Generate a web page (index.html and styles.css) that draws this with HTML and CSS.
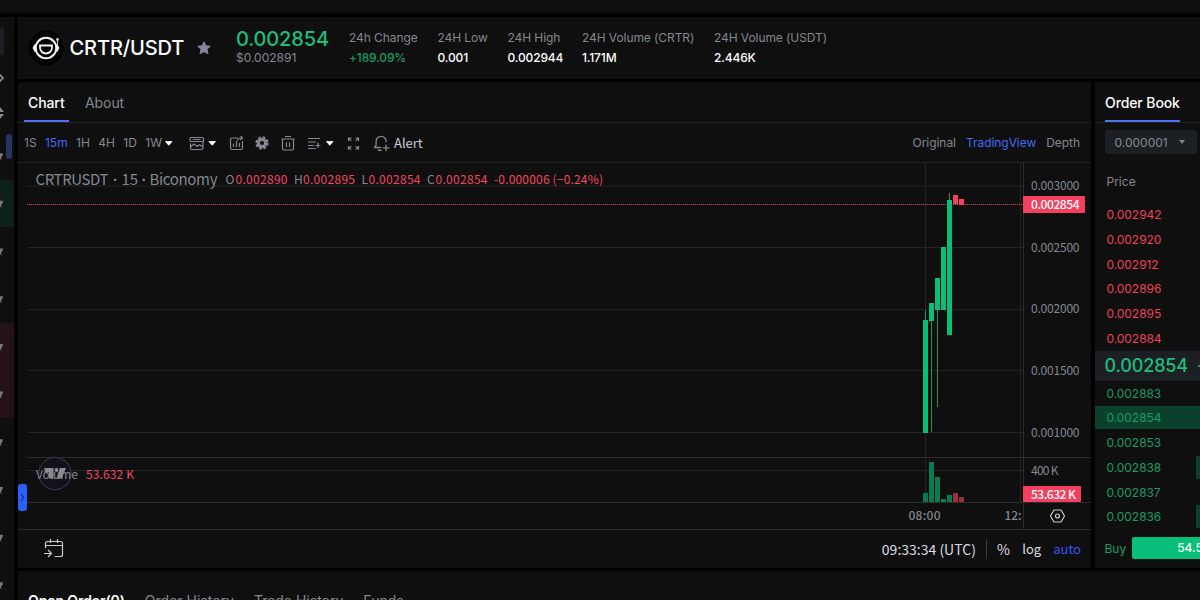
FILE: index.html
```html
<!DOCTYPE html>
<html lang="en">
<head>
    <meta charset="UTF-8">
    <meta name="viewport" content="width=device-width, initial-scale=1.0">
    <title>CRTR/USDT</title>
    <link rel="stylesheet" href="styles.css">
</head>
<body>
    <div class="topbar"></div>
    <div class="layout">
        <aside class="pairs">
            <div class="pairs-head">
                <div class="search"></div>
                <svg class="edge-icon" width="6" height="14" viewBox="0 0 6 14"><path d="M-3 7L0 4L3 7L0 10Z" fill="none" stroke="#8d8f98" stroke-width="1.6"/></svg>
                <svg class="edge-icon sort" width="6" height="14" viewBox="0 0 6 14"><path d="M-4 6L0 1L4 6ZM-4 8L0 13L4 8Z" fill="#85878f"/></svg>
            </div>
            <div class="pair"></div>
            <div class="pair up"></div>
            <div class="pair"></div>
            <div class="pair"></div>
            <div class="pair down"></div>
            <div class="pair down"></div>
            <div class="pair"></div>
            <div class="pair"></div>
            <div class="pair"></div>
            <div class="pair"></div>
            <div class="scroll-thumb"></div>
        </aside>

        <main class="content">
            <header class="ticker">
                <svg class="coin" width="36" height="36" viewBox="0 0 36 36">
                    <circle cx="18" cy="18" r="17.5" fill="#000"/>
                    <circle cx="18" cy="18" r="10.3" fill="none" stroke="#f4f4f4" stroke-width="2"/>
                    <path d="M7 14.5L5 18L7 21.5ZM29 14.5L31 18L29 21.5Z" fill="#f4f4f4" stroke="#f4f4f4"/>
                    <path d="M29.5 15V10" stroke="#bbb" stroke-width="1.2"/>
                    <circle cx="29.5" cy="9.5" r="1.4" fill="#ccc"/>
                    <path d="M12 15.5H24V17.5A6 6 0 0 1 12 17.5Z" fill="none" stroke="#f4f4f4" stroke-width="1.8"/>
                </svg>
                <h1 class="symbol">CRTR/USDT</h1>
                <svg class="fav" width="14" height="14" viewBox="0 0 14 14"><path d="M7 .8L8.9 4.8L13.2 5.3L10 8.3L10.9 12.7L7 10.6L3.1 12.7L4 8.3L.8 5.3L5.1 4.8Z" fill="#85879b" stroke="#85879b" stroke-linejoin="round"/></svg>
                <div class="last">
                    <div class="last-price">0.002854</div>
                    <div class="last-usd">$0.002891</div>
                </div>
                <dl class="stat change"><dt>24h Change</dt><dd class="green">+189.09%</dd></dl>
                <dl class="stat low"><dt>24H Low</dt><dd>0.001</dd></dl>
                <dl class="stat high"><dt>24H High</dt><dd>0.002944</dd></dl>
                <dl class="stat volume"><dt>24H Volume (CRTR)</dt><dd>1.171M</dd></dl>
                <dl class="stat"><dt>24H Volume (USDT)</dt><dd>2.446K</dd></dl>
            </header>

            <div class="middle">
                <section class="chart-panel">
                    <nav class="tabs">
                        <a class="tab active">Chart</a>
                        <a class="tab">About</a>
                    </nav>
                    <div class="toolbar">
                        <div class="intervals">
                            <span>1S</span><span class="blue">15m</span><span>1H</span><span>4H</span><span>1D</span><span>1W</span>
                        </div>
                        <svg class="tools" width="235" height="24" viewBox="163 131 235 24" fill="none" stroke="#85878f" stroke-width="1.2">
                            <!-- dropdown carets -->
                            <path d="M165.500 141.500h6.500l-3.250 3.800ZM209 141.500h6.500l-3.250 3.800ZM326.500 141.500h6.500l-3.250 3.800Z" fill="#fff" stroke="#fff" stroke-width=".8" stroke-linejoin="round"/>
                            <!-- chart type -->
                            <rect x="190" y="137.500" width="13.500" height="4" rx="1"/>
                            <path d="M193 139.500h7.500M190.500 143.500v4.500q0 1.500 1.500 1.500h9.500q1.500 0 1.500-1.500v-7M190.500 147l3.500-3 3.300 2.500 2.200-1.800 3.500 2"/>
                            <!-- indicators -->
                            <path d="M238 138h-6q-1.500 0-1.500 1.500v8.500q0 1.500 1.500 1.500h9q1.500 0 1.500-1.500v-7M233.500 147v-3.500M236.500 147v-6M239.500 147v-4M237.500 140.500q.5-2.500 4.500-2.500M240.500 136l2 2-2 2"/>
                            <!-- settings -->
                            <circle cx="262" cy="143" r="3.700" stroke-width="3.200"/>
                            <circle cx="262" cy="143" r="5.600" stroke-width="2.200" stroke-dasharray="2.500 1.900"/>
                            <!-- remove -->
                            <path d="M281.500 139h13M285 136.500h6M282.500 139v9.500q0 1.500 1.500 1.500h8q1.500 0 1.500-1.500v-9.500M286.500 142.500v4.500M289.500 142.500v4.500"/>
                            <!-- indicator list -->
                            <path d="M308 138.500h12M308 142h8M308 145.500h6M308 148.500h8M318 142.500v5.500M315.500 145.500h5"/>
                            <!-- fullscreen -->
                            <path d="M348.500 141v-3h3M355.500 138h3v3M348.500 146v3h3M355.500 149h3v-3M349 138.500l2.300 2.300M358 138.500l-2.300 2.300M349 148.500l2.300-2.300M358 148.500l-2.300-2.300"/>
                            <!-- alert bell -->
                            <path d="M381 147.500h-6.200q0-1 1.300-2.200v-4a5 5 0 0 1 10 0v1M378 149.500q1.700 1.800 3.800 .3M386 144.500v6.500M382.800 147.800h6.500" stroke-width="1.300"/>
                        </svg>
                        <span class="alert">Alert</span>
                        <div class="views"><span>Original</span><span class="blue">TradingView</span><span>Depth</span></div>
                    </div>

                    <svg class="chart" width="1073" height="366" viewBox="18 163 1073 366">
                        <!-- grid -->
                        <g stroke="#222326">
                            <path d="M27 186H1023M27 247.500H1023M27 309.500H1023M27 370.500H1023M27 432.500H1023M27 470.500H1023"/>
                            <path d="M925.500 163V502M1020.500 163V502"/>
                        </g>
                        <path d="M27 457.500H1091M27 502.500H1091M1023.500 163V529" stroke="#2b2c30"/>
                        <!-- last price line -->
                        <path d="M27 204.500H1023" stroke="#42181f"/>
                        <path d="M27 204.500H1023" stroke="#c9475a" stroke-dasharray="1 1" shape-rendering="crispEdges"/>
                        <!-- candles -->
                        <path d="M925.500 310V320M931.500 321V432M937.500 310V407M949.500 193V200" stroke="#0a9c68"/>
                        <g fill="#07bf79">
                            <rect x="923" y="320" width="5" height="113"/>
                            <rect x="929" y="303" width="5" height="18"/>
                            <rect x="935" y="278" width="5" height="32"/>
                            <rect x="941" y="247" width="5" height="63"/>
                            <rect x="947" y="200" width="5" height="135"/>
                        </g>
                        <g fill="#f7405f">
                            <rect x="953" y="195" width="5" height="9"/>
                            <rect x="959" y="199" width="5" height="6"/>
                        </g>
                        <!-- volume -->
                        <g fill="#097b50">
                            <rect x="923" y="493" width="5" height="9"/>
                            <rect x="929" y="462" width="5" height="40"/>
                            <rect x="935" y="477" width="5" height="25"/>
                            <rect x="941" y="499" width="5" height="3"/>
                            <rect x="947" y="495" width="5" height="7"/>
                        </g>
                        <g fill="#982e42">
                            <rect x="953" y="493" width="5" height="9"/>
                            <rect x="959" y="497" width="5" height="5"/>
                        </g>
                        <!-- logo badge -->
                        <circle cx="55" cy="473.500" r="16.300" fill="#12131a" stroke="#3a3b46"/>
                        <path d="M44.500 468h9v10.500h-4.500v-6h-4.500ZM60 468h6l-4.500 10.500h-5Z" fill="#8b8c94"/>
                        <circle cx="56.500" cy="470" r="2" fill="#8b8c94"/>
                        <!-- legend -->
                        <g fill="#85878f">
                            <g font-size="15">
                                <text x="35.500" y="185" textLength="73">CRTRUSDT</text>
                                <text x="121.500" y="185" textLength="16.500">15</text>
                                <text x="149.500" y="185" textLength="68">Biconomy</text>
                            </g>
                            <g class="dot" font-size="15">
                                <text x="113" y="185">·</text><text x="141.500" y="185">·</text>
                            </g>
                            <g font-size="12">
                                <text x="225.500" y="184">O</text><text x="294" y="184">H</text><text x="361.500" y="184">L</text><text x="427" y="184">C</text>
                                <text x="36" y="479" textLength="42">Volume</text>
                            </g>
                        </g>
                        <g fill="#f04860" font-size="12">
                            <text x="235.500" y="184" textLength="52">0.002890</text>
                            <text x="303" y="184" textLength="52">0.002895</text>
                            <text x="368.500" y="184" textLength="52">0.002854</text>
                            <text x="435.500" y="184" textLength="52">0.002854</text>
                            <text x="494" y="184" textLength="109">-0.000006 (−0.24%)</text>
                            <text x="86" y="479" textLength="48">53.632 K</text>
                        </g>
                        <!-- axes -->
                        <g fill="#85878f" font-size="12">
                            <text x="1031" y="190" textLength="48.500">0.003000</text>
                            <text x="1031" y="251.500" textLength="48.500">0.002500</text>
                            <text x="1031" y="313" textLength="48.500">0.002000</text>
                            <text x="1031" y="375" textLength="48.500">0.001500</text>
                            <text x="1031" y="437" textLength="48.500">0.001000</text>
                            <text x="1031" y="475" textLength="27.500">400 K</text>
                            <g font-weight="500">
                                <text x="908.500" y="520" textLength="32">08:00</text>
                                <text x="1004.500" y="520" textLength="17">12:</text>
                            </g>
                        </g>
                        <path d="M1023 196h61q1 0 1 1v15q0 1-1 1h-61ZM1023 486h57q1 0 1 1v14q0 1-1 1h-57Z" fill="#f7405f"/>
                        <g fill="#fff" font-size="12" font-weight="500">
                            <text x="1031" y="209" textLength="48.500">0.002854</text>
                            <text x="1031" y="499" textLength="45">53.632 K</text>
                        </g>
                        <path d="M1054 510h7l3.500 6-3.500 6h-7l-3.500-6Z" fill="none" stroke="#c9cad0" stroke-width="1.200"/>
                        <circle cx="1057.500" cy="516" r="2" fill="none" stroke="#c9cad0" stroke-width="1.200"/>
                    </svg>

                    <div class="chart-footer">
                        <svg class="calendar" width="22" height="22" viewBox="0 0 22 22" fill="none" stroke="#c9cad0" stroke-width="1.200"><path d="M2.500 10V5.500a2 2 0 0 1 2-2h13a2 2 0 0 1 2 2v11a2 2 0 0 1-2 2h-6M2.500 7.500h17M7.500 1v4M14.500 1v4M1 15.500h7M5 12l3.500 3.500L5 19"/></svg>
                        <span class="clock">09:33:34 (UTC)</span>
                        <span class="percent">%</span>
                        <span class="log">log</span>
                        <span class="auto">auto</span>
                    </div>
                    <div class="handle"><svg width="5" height="9" viewBox="0 0 5 9"><path d="M1 1l2.500 3.500L1 8" fill="none" stroke="#0b1b4d"/></svg></div>
                </section>

                <section class="book">
                    <nav class="tabs"><a class="tab active">Order Book</a></nav>
                    <div class="precision">0.000001<i class="caret"></i></div>
                    <div class="book-head">Price</div>
                    <ul class="asks">
                        <li>0.002942</li>
                        <li>0.002920</li>
                        <li>0.002912</li>
                        <li>0.002896</li>
                        <li>0.002895</li>
                        <li>0.002884</li>
                    </ul>
                    <div class="mid">0.002854<i class="mid-arrow"></i></div>
                    <ul class="bids">
                        <li>0.002883</li>
                        <li class="depth-full">0.002854</li>
                        <li>0.002853</li>
                        <li class="depth-small">0.002838</li>
                        <li>0.002837</li>
                        <li class="depth-small">0.002836</li>
                    </ul>
                    <div class="ratio">Buy<div class="ratio-bar">54.5</div></div>
                </section>
            </div>

            <nav class="orders">
                <a class="active">Open Order(0)</a>
                <a>Order History</a>
                <a>Trade History</a>
                <a>Funds</a>
            </nav>
        </main>
    </div>
</body>
</html>
```
FILE: styles.css
```css
* {
    box-sizing: border-box;
    margin: 0;
    padding: 0;
}

body {
    width: 1200px;
    height: 600px;
    overflow: hidden;
    background: #000;
    color: #85878f;
    font-family: Inter, sans-serif;
    font-size: 12px;
}

svg { display: block; flex: none; }
ul { list-style: none; }
.blue { color: #4468f0; }

.topbar {
    height: 13px;
    margin-bottom: 4px;
    background: #0f0f0f;
}

.layout {
    display: flex;
    gap: 4px;
    height: 583px;
}

/* Left pair list, mostly scrolled out of view */
.pairs {
    position: relative;
    flex: none;
    width: 14px;
    overflow: hidden;
    background: #0f0f0f;
}

.pairs-head { height: 115px; padding-top: 10px; }
.search {
    width: 4px;
    height: 28px;
    margin-bottom: 16px;
    border-radius: 0 3px 3px 0;
    background: #1d1f24;
}
.edge-icon { overflow: hidden; }
.sort { margin-top: 21px; }

.pair {
    display: flex;
    align-items: center;
    height: 47.7px;
    padding-top: 1px;
}
.pair::before {
    content: "";
    width: 3px;
    height: 8px;
    background: #77797f;
    clip-path: polygon(0 10%, 100% 10%, 70% 55%, 30% 60%, 60% 100%, 0 80%);
}
.pair.up { background: #0c2119; }
.pair.down { background: #251216; }

.scroll-thumb {
    position: absolute;
    top: 117px;
    left: 6px;
    width: 6px;
    height: 25px;
    border-radius: 3px;
    background: #243463;
}

.content {
    display: flex;
    flex-direction: column;
    width: 1182px;
}

/* Header */
.ticker {
    display: flex;
    align-items: center;
    flex: none;
    height: 62px;
    padding-left: 9.5px;
    background: #0f0f0f;
    white-space: nowrap;
}
.symbol {
    width: 127px;
    margin-left: 6px;
    color: #fff;
    font-size: 20px;
    font-weight: 500;
    line-height: 24px;
    letter-spacing: -0.1px;
}
.fav { margin-right: 25.5px; }
.last { width: 113px; }
.last-price {
    color: #1cbe7e;
    font-size: 20px;
    font-weight: 500;
    line-height: 22px;
    letter-spacing: -0.15px;
}
.last-usd { margin-bottom: 2px; line-height: 16px; }
.stat dt { line-height: 20px; letter-spacing: -0.08px; }
.stat dd { color: #fff; font-weight: 500; line-height: 20px; letter-spacing: -0.15px; }
.stat dd.green { color: #169b67; }
.change { width: 88.5px; }
.low { width: 70px; }
.high { width: 74.5px; }
.volume { width: 132px; }

.middle {
    display: flex;
    flex: none;
    gap: 4px;
    height: 486px;
    margin-top: 3px;
}

.tabs {
    display: flex;
    gap: 12.5px;
    height: 41px;
    padding-left: 6px;
    border-bottom: 1px solid #202124;
}
.tab {
    padding: 0 4px;
    font-size: 14px;
    line-height: 41px;
    letter-spacing: -0.1px;
}
.tab.active {
    height: 40px;
    border-bottom: 2px solid #5273ee;
    color: #fff;
    font-weight: 500;
}

/* Chart */
.chart-panel {
    position: relative;
    flex: none;
    width: 1073px;
    background: #0f0f0f;
}
.toolbar {
    display: flex;
    align-items: center;
    height: 40px;
    padding: 0 11px 0 6px;
    border-bottom: 1px solid #222326;
}
.intervals {
    display: flex;
    gap: 8.4px;
    width: 139px;
    white-space: nowrap;
}
.alert {
    margin-left: -4px;
    color: #c9cad6;
    font-family: "Noto Sans CJK SC", sans-serif;
    font-size: 13px;
}
.views { display: flex; gap: 10px; margin-left: auto; letter-spacing: -0.05px; }

.chart { font-family: "Noto Sans CJK SC", sans-serif; }
.dot { font-family: "Noto Sans", sans-serif; font-weight: 700; }

.chart-footer {
    display: flex;
    align-items: center;
    height: 39px;
    padding: 0 10px 0 25px;
    border-top: 1px solid #2b2c30;
    color: #dcdde2;
    font-family: "Noto Sans CJK SC", sans-serif;
    font-size: 13px;
    line-height: 20px;
    white-space: nowrap;
}
.clock { margin-left: auto; padding-right: 10px; font-size: 14px; }
.percent {
    padding-left: 10px;
    border-left: 1px solid #3a3b40;
    font-size: 14px;
}
.log { margin-left: 12.5px; }
.auto { margin-left: 12px; color: #3458f0; }

.handle {
    position: absolute;
    top: 402px;
    left: 0;
    display: flex;
    align-items: center;
    justify-content: center;
    width: 9px;
    height: 27px;
    border-radius: 3px;
    background: #2b60ff;
}

/* Order book */
.book {
    flex: none;
    width: 105px;
    overflow: hidden;
    background: #0f0f0f;
}
.book .tab { padding: 0; margin-left: 4px; }
.precision {
    display: flex;
    align-items: center;
    justify-content: space-between;
    width: 92px;
    height: 24px;
    margin: 7px 0 0 9.5px;
    padding: 0 12px 0 10px;
    border-radius: 3px;
    background: #1c1f24;
}
.caret {
    border: 3.5px solid transparent;
    border-top: 4px solid #85878f;
    border-bottom: 0;
}
.book-head { padding: 20px 0 13px 11.5px; line-height: 16px; }
.asks li, .bids li {
    height: 24.8px;
    padding-left: 11.5px;
    line-height: 24.8px;
    letter-spacing: -0.05px;
}
.asks { height: 147.5px; color: #ed4258; }
.bids { padding-top: 1px; color: #169b67; }
.mid {
    display: flex;
    align-items: center;
    justify-content: space-between;
    height: 30px;
    padding-left: 9.5px;
    background: #1c1f24;
    color: #1cbe7e;
    font-size: 18px;
    font-weight: 500;
    letter-spacing: -0.15px;
}
.mid-arrow { width: 2px; height: 2px; background: #169b67; }
.depth-full { background: linear-gradient(#0b412c, #0b412c) 0 0 / 100% 23px no-repeat; }
.depth-small { background: linear-gradient(#0b412c, #0b412c) 100% 0 / 4px 23px no-repeat; }
.ratio {
    display: flex;
    align-items: center;
    gap: 6px;
    margin-top: 7px;
    padding-left: 9.5px;
    color: #169b67;
}
.ratio-bar {
    flex: 1;
    height: 22px;
    padding-left: 45px;
    border-radius: 2px 0 0 2px;
    background: #07bf79;
    color: #fff;
    font-weight: 500;
    line-height: 22px;
}

.orders {
    display: flex;
    flex: none;
    gap: 20px;
    height: 40px;
    margin-top: 3px;
    padding: 20px 0 0 10px;
    background: #0f0f0f;
    font-size: 14px;
    line-height: 20px;
}
.orders .active { color: #fff; font-weight: 600; letter-spacing: -0.1px; }
```
